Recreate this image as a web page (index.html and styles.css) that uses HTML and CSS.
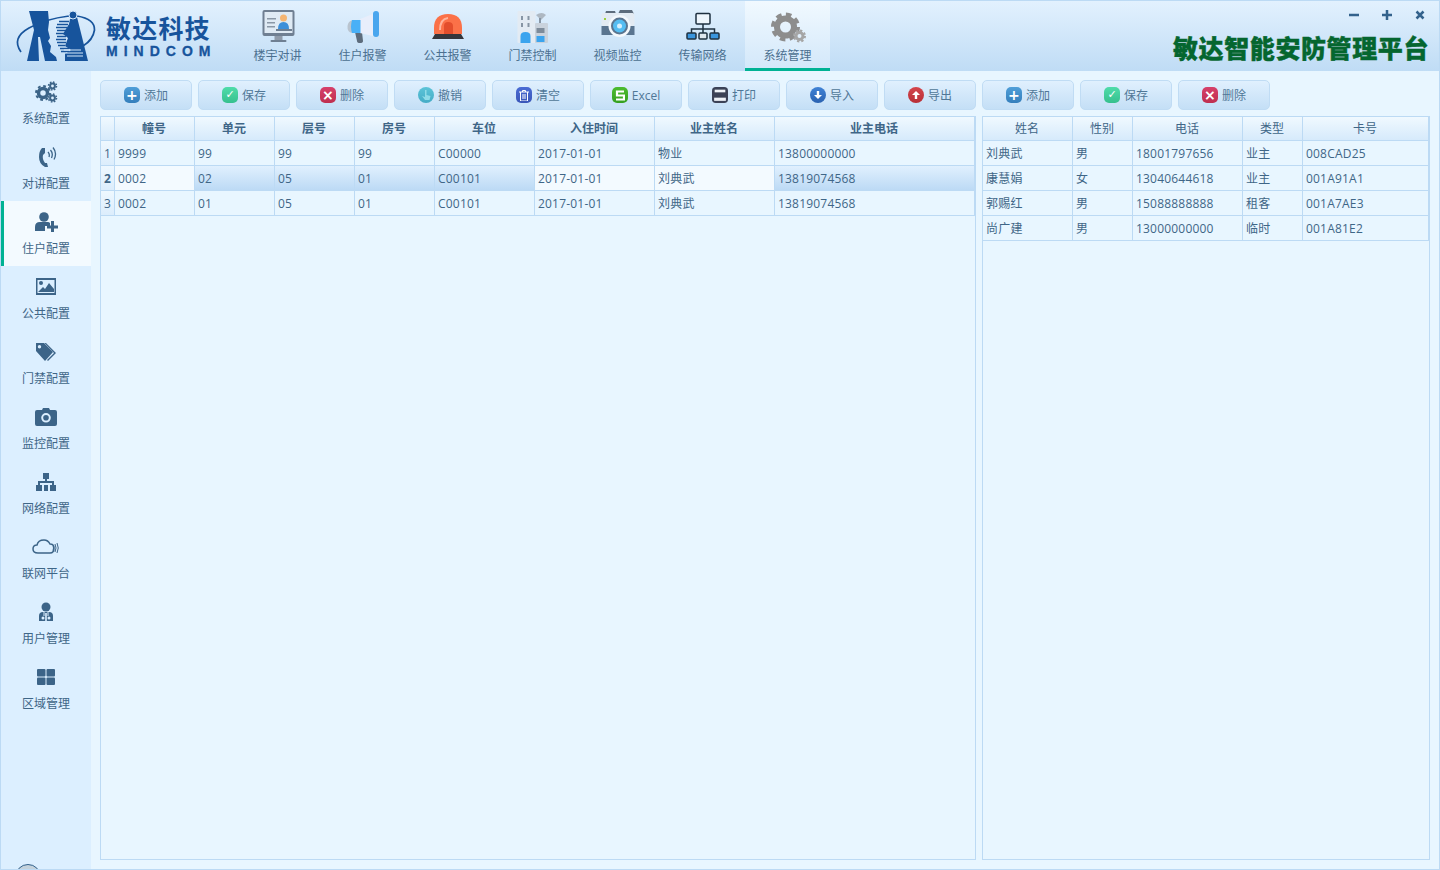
FILE: index.html
```html
<!DOCTYPE html>
<html lang="zh-CN">
  <head>
    <meta charset="UTF-8" />
    <title>敏达智能安防管理平台</title>
    <link rel="stylesheet" href="styles.css">
  </head>
  <body>
    <div class="app">
      <header class="header">
        <div class="brand">
          <svg class="brand-logo" width="82" height="52" viewBox="0 0 82 52">
            <path d="M6 42 Q-4 28 14 18 Q30 9 54 6" fill="none" stroke="#17549c" stroke-width="1.700"/>
            <path d="M62 6 Q80 9 79.500 20 Q78 30 68 36" fill="none" stroke="#17549c" stroke-width="1.700"/>
            <path d="M14 1 H33 L34 12 L33 20 L35 28 L33 31 L36 36 L35 42 L41 47 L42 51 H30 L25 27 L23 27 L24 51 H12 L19 20Z" fill="#17549c"/>
            <path d="M55 9 L62 7 L73 51 H50 L50 44 L56 40 L50 36 L53 28 L48 24 L54 14Z" fill="#17549c"/>
            <path d="M44 11.500h10M42 14.500h11M41 17.500h11M42 20.500h9M41 23.500h8M42 26.500h9M41 29.500h10M42 32.500h9M43 35.500h7M45 38.500h9M46 41.500h8" stroke="#17549c" stroke-width="1.600"/>
            <path d="M49 40h17M51 43h17M52 46h16" stroke="#d6e9fb" stroke-width="1"/>
            <circle cx="58" cy="5" r="4" fill="#17549c" stroke="#d6e9fb"/>
          </svg>
          <div class="brand-text">
            <div class="brand-name">敏达科技</div>
            <div class="brand-en">MINDCOM</div>
          </div>
        </div>
        <nav class="tabs">
          <a class="tab">
            <svg width="40" height="36" viewBox="0 0 40 36">
              <rect x="4.500" y="1" width="32" height="26" rx="2" fill="#6f7f92"/>
              <rect x="6.500" y="3" width="28" height="21" fill="#dfeaf4"/>
              <path d="M9 9h9v1.500H9zM9 13h8v1.500H9zM9 17h8v1.500H9z" fill="#8a97a6"/>
              <circle cx="25.500" cy="9" r="3.500" fill="#f5b572"/>
              <path d="M20 20 Q20 13 25.500 13 Q31 13 31 20Z" fill="#3d8fd9"/>
              <rect x="18" y="20" width="16" height="2" fill="#6f7f92"/>
              <path d="M16.500 27h8v4h-8z" fill="#8f9baa"/>
              <rect x="12.500" y="31" width="16" height="2" rx="1" fill="#6f7f92"/>
            </svg>
            <span>楼宇对讲</span>
          </a>
          <a class="tab">
            <svg width="40" height="36" viewBox="0 0 40 36">
              <path d="M12 23 L19 23 L20 32 Q20 34 17 34 Q14 34 14 32Z" fill="#5d6c7c"/>
              <path d="M10 11 L9 24 Q4 23 4.500 17 Q5 12 10 11Z" fill="#b9c4cf"/>
              <path d="M17 10 L30 5 L30 27 L17 24Z" fill="#e8eefb"/>
              <path d="M9 11 H17.500 V24 H9 Q7 18 9 11Z" fill="#49b0f7"/>
              <rect x="30" y="2" width="6" height="26" rx="3" fill="#49a6ee"/>
            </svg>
            <span>住户报警</span>
          </a>
          <a class="tab">
            <svg width="40" height="36" viewBox="0 0 40 36">
              <path d="M6 25 V19 Q6 5 20 5 Q34 5 34 19 V25Z" fill="#fb7148"/>
              <path d="M12 21 Q12 10 20 9" stroke="#ffb49c" stroke-width="2" fill="none"/>
              <path d="M16 25 V17 Q16 13 20 13 Q25 13 25 17 V25Z" fill="#e34e2c"/>
              <path d="M7 25h26l3 5H4z" fill="#35363c"/>
            </svg>
            <span>公共报警</span>
          </a>
          <a class="tab">
            <svg width="40" height="36" viewBox="0 0 40 36">
              <rect x="4.500" y="2" width="18" height="32" rx="1" fill="#e3ebf3"/>
              <rect x="8" y="7" width="2" height="4" fill="#8795a4"/><rect x="14.500" y="7" width="2" height="4" fill="#8795a4"/>
              <rect x="8" y="14" width="2" height="4" fill="#8795a4"/><rect x="14.500" y="14" width="2" height="4" fill="#8795a4"/>
              <path d="M7.500 34 V27 Q7.500 23 12.500 23 Q17.500 23 17.500 27 V34Z" fill="#3ba4ee"/>
              <rect x="22" y="14" width="13" height="20" rx="1" fill="#c9d2dc"/>
              <rect x="23.500" y="19" width="8" height="5" fill="#7d8b9a"/>
              <rect x="23.500" y="27" width="8" height="6" fill="#3ba4ee"/>
              <path d="M23 6 Q29 2 33 6 L28 11Z" fill="#aeb8c2"/>
              <path d="M27 9v5" stroke="#8795a4" stroke-width="2"/>
            </svg>
            <span>门禁控制</span>
          </a>
          <a class="tab">
            <svg width="40" height="36" viewBox="0 0 40 36">
              <path d="M8 2h9l1 3H7zM22 1h12l2 4H20z" fill="#5d6c7c"/>
              <rect x="3.500" y="4" width="33" height="13" rx="2" fill="#e3ebf3"/>
              <rect x="3.500" y="17" width="33" height="9" fill="#5a7590"/>
              <rect x="6" y="9" width="2" height="2" fill="#9bd13f"/>
              <circle cx="21.500" cy="17" r="11" fill="#f4f8fc"/>
              <circle cx="21.500" cy="17" r="8.500" fill="#5a7590"/>
              <circle cx="21.500" cy="17" r="6.500" fill="#55bdf2"/>
              <circle cx="21.500" cy="17" r="2.500" fill="#d6f0fe"/>
            </svg>
            <span>视频监控</span>
          </a>
          <a class="tab">
            <svg width="40" height="36" viewBox="0 0 40 36">
              <rect x="13" y="4.500" width="14" height="10.500" rx="1" fill="#eef6fd" stroke="#1e3040" stroke-width="1.500"/>
              <path d="M20 15v9M8.500 24v-4h23v4" stroke="#1e3040" stroke-width="1.500" fill="none"/>
              <rect x="4" y="24" width="9" height="6" rx="1" fill="#3a95dd" stroke="#1e3040" stroke-width="1.500"/>
              <rect x="16" y="24" width="8" height="6" rx="1" fill="#dfe8f0" stroke="#1e3040" stroke-width="1.500"/>
              <rect x="27" y="24" width="9" height="6" rx="1" fill="#3a95dd" stroke="#1e3040" stroke-width="1.500"/>
            </svg>
            <span>传输网络</span>
          </a>
          <a class="tab tab-active">
            <svg width="40" height="36" viewBox="0 0 40 36">
              <circle cx="17.500" cy="18" r="8.500" fill="none" stroke="#8d8d8d" stroke-width="6"/>
              <circle cx="17.500" cy="18" r="12.500" fill="none" stroke="#8d8d8d" stroke-width="4" stroke-dasharray="5.500 4.320"/>
              <circle cx="31.500" cy="27" r="3.500" fill="none" stroke="#a5a5a5" stroke-width="3"/>
              <circle cx="31.500" cy="27" r="5.500" fill="none" stroke="#a5a5a5" stroke-width="2" stroke-dasharray="2.300 2"/>
            </svg>
            <span>系统管理</span>
          </a>
        </nav>
        <div class="head-right">
          <div class="win-btns">
            <svg width="10" height="10" viewBox="0 0 10 10"><path d="M0 5h10" stroke="#33628c" stroke-width="2.500"/></svg>
            <svg width="10" height="10" viewBox="0 0 10 10"><path d="M0 5h10M5 0v10" stroke="#33628c" stroke-width="2.500"/></svg>
            <svg width="10" height="10" viewBox="0 0 10 10"><path d="M1.500 1.500l7 7M8.500 1.500l-7 7" stroke="#33628c" stroke-width="2.500"/></svg>
          </div>
          <div class="app-title">敏达智能安防管理平台</div>
        </div>
      </header>

      <div class="body">
        <aside class="side">
          <a class="side-item">
            <svg width="24" height="24" viewBox="0 0 24 24">
              <circle cx="9" cy="13" r="4.500" fill="none" stroke="#3c6488" stroke-width="3.500"/>
              <circle cx="9" cy="13" r="7" fill="none" stroke="#3c6488" stroke-width="2" stroke-dasharray="2.800 2.700"/>
              <circle cx="18.500" cy="6" r="2.400" fill="none" stroke="#3c6488" stroke-width="2"/>
              <circle cx="18.500" cy="6" r="4" fill="none" stroke="#3c6488" stroke-width="1.500" stroke-dasharray="1.600 1.540"/>
              <circle cx="18.500" cy="18" r="2.400" fill="none" stroke="#3c6488" stroke-width="2"/>
              <circle cx="18.500" cy="18" r="4" fill="none" stroke="#3c6488" stroke-width="1.500" stroke-dasharray="1.600 1.540"/>
            </svg>
            <span>系统配置</span>
          </a>
          <a class="side-item">
            <svg width="24" height="24" viewBox="0 0 24 24">
              <path d="M8 3 L11 3 L11 8 L9 10 Q8 14 11 18 L13 18 L14 22 L11 22 Q5 19 5 12 Q5 6 8 3Z" fill="#3c6488"/>
              <path d="M14 7 Q16 9 15 12M16.500 5 Q19.500 8.500 17.500 13M19 2.500 Q23.500 8 20 14.500" stroke="#3c6488" stroke-width="1.300" fill="none"/>
            </svg>
            <span>对讲配置</span>
          </a>
          <a class="side-item side-active">
            <svg width="24" height="24" viewBox="0 0 24 24">
              <circle cx="10" cy="7" r="4.800" fill="#3c6488"/>
              <path d="M1 21 V17 Q1 12 6 12 H14 Q15 12 16 13 V16 H11 V21Z" fill="#3c6488"/>
              <path d="M13 15.500h11v3H13zM17 11h3v11h-3z" fill="#3c6488"/>
            </svg>
            <span>住户配置</span>
          </a>
          <a class="side-item">
            <svg width="24" height="24" viewBox="0 0 24 24">
              <path d="M2 3h20v17H2z M3.500 5v13h17V5z" fill="#3c6488" fill-rule="evenodd"/>
              <circle cx="7" cy="8" r="2" fill="#3c6488"/>
              <path d="M4 17 L9 12 L11 14 L15 8 L20 14 V17Z" fill="#3c6488"/>
            </svg>
            <span>公共配置</span>
          </a>
          <a class="side-item">
            <svg width="24" height="24" viewBox="0 0 24 24">
              <path d="M2 3 H10 L19 12 L11 21 L2 11Z M5.500 5 A1.700 1.700 0 1 0 5.501 8.400 A1.700 1.700 0 1 0 5.500 5Z" fill="#3c6488" fill-rule="evenodd"/>
              <path d="M12 3 L22 13 L14 21 L13 20 L20 13 L10.500 3Z" fill="#3c6488"/>
            </svg>
            <span>门禁配置</span>
          </a>
          <a class="side-item">
            <svg width="24" height="24" viewBox="0 0 24 24">
              <path d="M3 5 H8 L9 3 H15 L16 5 H21 Q23 5 23 7 V19 Q23 21 21 21 H3 Q1 21 1 19 V7 Q1 5 3 5Z M12 8 A4.800 4.800 0 1 0 12.010 17.600 A4.800 4.800 0 1 0 12 8Z" fill="#3c6488" fill-rule="evenodd"/>
              <circle cx="12" cy="12.800" r="2.800" fill="#3c6488"/>
            </svg>
            <span>监控配置</span>
          </a>
          <a class="side-item">
            <svg width="24" height="24" viewBox="0 0 24 24">
              <path d="M9 3h6v6h-2v2h7v4h2v6h-6v-6h2v-2h-6v2h2v6H10v-6h2v-2H6v2h2v6H2v-6h2v-4h7V9H9z" fill="#3c6488"/>
            </svg>
            <span>网络配置</span>
          </a>
          <a class="side-item">
            <svg width="28" height="24" viewBox="0 0 28 24">
              <path d="M6 18 Q1 18 1 14 Q1 10 5 10 Q6 5 12 5 Q16 5 18 9 Q22 9 22 13 Q22 18 18 18Z" fill="none" stroke="#3c6488" stroke-width="1.500"/>
              <path d="M23 9 Q25 13 23 17M25 8 Q27.500 13 25 18M21 10.500 Q22 13 21 15.500" fill="none" stroke="#3c6488" stroke-width="1"/>
            </svg>
            <span>联网平台</span>
          </a>
          <a class="side-item">
            <svg width="24" height="24" viewBox="0 0 24 24">
              <circle cx="12" cy="7" r="4.500" fill="#3c6488"/>
              <path d="M5 21 V16 Q5 12 9 12 H15 Q19 12 19 16 V21Z" fill="#3c6488"/>
              <path d="M10 12 L10 16 M14 12 L14 16" stroke="#dcefff" stroke-width="1"/>
              <circle cx="9" cy="18" r="1.500" fill="#dcefff"/><circle cx="15" cy="18" r="1.500" fill="#dcefff"/>
              <rect x="11.200" y="13" width="1.600" height="8" fill="#dcefff"/>
            </svg>
            <span>用户管理</span>
          </a>
          <a class="side-item">
            <svg width="24" height="24" viewBox="0 0 24 24">
              <rect x="3" y="4" width="8.500" height="7.500" rx="1" fill="#3c6488"/>
              <rect x="12.500" y="4" width="8.500" height="7.500" rx="1" fill="#3c6488"/>
              <rect x="3" y="12.500" width="8.500" height="7.500" rx="1" fill="#3c6488"/>
              <rect x="12.500" y="12.500" width="8.500" height="7.500" rx="1" fill="#3c6488"/>
            </svg>
            <span>区域管理</span>
          </a>
          <div class="side-foot"></div>
        </aside>

        <main class="content">
          <div class="toolbar">
            <button class="btn"><i class="ico ico-blue">+</i>添加</button>
            <button class="btn"><i class="ico ico-green">✓</i>保存</button>
            <button class="btn"><i class="ico ico-red">×</i>删除</button>
            <button class="btn"><i class="ico ico-teal">
              <svg width="12" height="12" viewBox="0 0 12 12"><path d="M5 1h1.500v5l4 1-1 4H5L2 7l3 1z" fill="#8fdbe8"/></svg>
            </i>撤销</button>
            <button class="btn"><i class="ico ico-indigo">
              <svg width="10" height="11" viewBox="0 0 10 11"><path d="M0 2h10M1.500 2v9h7V2M3.500 2V.5h3V2M4 4v5M6 4v5" stroke="#fff" stroke-width="1" fill="none"/></svg>
            </i>清空</button>
            <button class="btn"><i class="ico ico-lime">
              <svg width="10" height="11" viewBox="0 0 10 11"><path d="M9 1.500H2v4h7v4H1" stroke="#fff" stroke-width="2.200" fill="none"/></svg>
            </i>Excel</button>
            <button class="btn"><i class="ico ico-print">
              <svg width="16" height="16" viewBox="0 0 15 15"><rect x="0" y="0" width="15" height="15" rx="3.500" fill="#3b4256"/><rect x="2.500" y="2.500" width="10" height="2.500" fill="#eef2f7"/><rect x="2" y="10" width="11" height="3" fill="#eef2f7"/></svg>
            </i>打印</button>
            <button class="btn"><i class="ico ico-down">
              <svg width="10" height="10" viewBox="0 0 10 10"><path d="M3.800 1h2.400v4H9L5 9 1 5h2.800z" fill="#fff"/></svg>
            </i>导入</button>
            <button class="btn"><i class="ico ico-up">
              <svg width="10" height="10" viewBox="0 0 10 10"><path d="M3.800 9h2.400V5H9L5 1 1 5h2.800z" fill="#fff"/></svg>
            </i>导出</button>
            <button class="btn"><i class="ico ico-blue">+</i>添加</button>
            <button class="btn"><i class="ico ico-green">✓</i>保存</button>
            <button class="btn"><i class="ico ico-red">×</i>删除</button>
          </div>

          <div class="panels">
            <section class="panel panel-left">
              <table class="grid">
                <colgroup>
                  <col class="w14"><col class="w80"><col class="w80"><col class="w80"><col class="w80"><col class="w100"><col class="w120"><col class="w120"><col class="w200">
                </colgroup>
                <thead>
                  <tr><th></th><th>幢号</th><th>单元</th><th>层号</th><th>房号</th><th>车位</th><th>入住时间</th><th>业主姓名</th><th>业主电话</th></tr>
                </thead>
                <tbody>
                  <tr><td class="num">1</td><td>9999</td><td>99</td><td>99</td><td>99</td><td>C00000</td><td>2017-01-01</td><td>物业</td><td>13800000000</td></tr>
                  <tr class="selected"><td class="num">2</td><td class="focus">0002</td><td>02</td><td>05</td><td>01</td><td>C00101</td><td class="focus">2017-01-01</td><td class="focus">刘典武</td><td>13819074568</td></tr>
                  <tr><td class="num">3</td><td>0002</td><td>01</td><td>05</td><td>01</td><td>C00101</td><td>2017-01-01</td><td>刘典武</td><td>13819074568</td></tr>
                </tbody>
              </table>
            </section>
            <section class="panel panel-right">
              <table class="grid grid-plain">
                <colgroup>
                  <col class="w90"><col class="w60"><col class="w110"><col class="w60"><col class="w126">
                </colgroup>
                <thead>
                  <tr><th>姓名</th><th>性别</th><th>电话</th><th>类型</th><th>卡号</th></tr>
                </thead>
                <tbody>
                  <tr><td>刘典武</td><td>男</td><td>18001797656</td><td>业主</td><td>008CAD25</td></tr>
                  <tr><td>康慧娟</td><td>女</td><td>13040644618</td><td>业主</td><td>001A91A1</td></tr>
                  <tr><td>郭赐红</td><td>男</td><td>15088888888</td><td>租客</td><td>001A7AE3</td></tr>
                  <tr><td>尚广建</td><td>男</td><td>13000000000</td><td>临时</td><td>001A81E2</td></tr>
                </tbody>
              </table>
            </section>
          </div>
        </main>
      </div>
    </div>
  </body>
</html>
```

FILE: styles.css
```css
* {
  box-sizing: border-box;
}

html, body {
  margin: 0;
  height: 100%;
  overflow: hidden;
}

body {
  font-family: "Open Sans", "Noto Sans CJK SC", sans-serif;
  font-size: 12px;
  color: #3f6687;
}

.app {
  height: 870px;
  display: flex;
  flex-direction: column;
  border: 1px solid #bcdaf4;
  background: #e8f6ff;
  overflow: hidden;
}

/* top bar */
.header {
  height: 70px;
  flex: none;
  display: flex;
  background: linear-gradient(#e2f1fe, #bfdcf5);
}

.brand {
  width: 234px;
  flex: none;
  display: flex;
  padding: 9px 0 0 14px;
  gap: 9px;
}

.brand-text {
  padding-top: 4px;
}

.brand-name {
  font-size: 25px;
  line-height: 27px;
  font-weight: 700;
  letter-spacing: 1.200px;
  color: #17549c;
  font-family: "Noto Sans CJK SC", sans-serif;
}

.brand-en {
  margin-top: 3px;
  font-family: "Liberation Sans", sans-serif;
  font-size: 14px;
  line-height: 14px;
  font-weight: 700;
  letter-spacing: 6px;
  color: #17549c;
  -webkit-text-stroke: 0.300px #17549c;
}

.tabs {
  display: flex;
}

.tab {
  width: 85px;
  height: 70px;
  padding-top: 8px;
  display: flex;
  flex-direction: column;
  align-items: center;
  gap: 2px;
  color: #4b7090;
}

.tab span {
  line-height: 16px;
  font-family: "Noto Sans CJK SC", sans-serif;
}

.tab-active {
  background: linear-gradient(#f1f9ff, #d3e8fa);
  border-bottom: 3px solid #00b294;
}

.head-right {
  margin-left: auto;
  padding-right: 10px;
  display: flex;
  flex-direction: column;
  align-items: flex-end;
}

.win-btns {
  display: flex;
  gap: 23px;
  padding: 9px 4px 0 0;
  height: 32px;
}

.app-title {
  font-family: "Noto Sans CJK SC", sans-serif;
  font-size: 25px;
  line-height: 28px;
  font-weight: 900;
  letter-spacing: 0.600px;
  color: #05662f;
  -webkit-text-stroke: 0.400px #05662f;
}

/* left menu */
.body {
  flex: 1;
  display: flex;
  min-height: 0;
}

.side {
  width: 90px;
  flex: none;
  display: flex;
  flex-direction: column;
  background: #dcefff;
  overflow: hidden;
}

.side-item {
  height: 65px;
  flex: none;
  padding-top: 9px;
  display: flex;
  flex-direction: column;
  align-items: center;
  gap: 6px;
  color: #3f6687;
}

.side-item span {
  line-height: 16px;
  font-family: "Noto Sans CJK SC", sans-serif;
}

.side-active {
  background: #f3faff;
  box-shadow: inset 3px 0 0 #00b294;
}

.side-foot {
  width: 26px;
  height: 26px;
  margin: 143px 0 0 14px;
  flex: none;
  border-radius: 50%;
  background: #c4d2dc;
  border: 1px solid #33628c;
}

/* content */
.content {
  flex: 1;
  min-width: 0;
  padding: 9px;
  display: flex;
  flex-direction: column;
  gap: 6px;
}

.toolbar {
  display: flex;
  gap: 6px;
}

.btn {
  width: 92px;
  height: 30px;
  padding: 0;
  display: flex;
  align-items: center;
  justify-content: center;
  gap: 4px;
  border: 1px solid #c0dcf4;
  border-radius: 5px;
  background: linear-gradient(#e0f0fe, #c4dff6);
  color: #507797;
  font: inherit;
}

.ico {
  width: 16px;
  height: 16px;
  flex: none;
  display: flex;
  align-items: center;
  justify-content: center;
  border-radius: 5px;
  color: #fff;
  font-style: normal;
  font-weight: 700;
  font-size: 14px;
  line-height: 16px;
  font-family: "DejaVu Sans", sans-serif;
}

.ico-blue { background: linear-gradient(#4f9ed8, #357fbc); }
.ico-green { background: linear-gradient(#4fdcaa, #36c08e); font-size: 11px; }
.ico-red { background: linear-gradient(#d6406a, #bf2f4f); }
.ico-teal { background: linear-gradient(#5cc4d8, #45acc6); border-radius: 8px; }
.ico-indigo { background: linear-gradient(#4a6cd4, #3a56b8); }
.ico-lime { background: linear-gradient(#4cbc30, #35a020); }
.ico-print { background: none; }
.ico-down { background: linear-gradient(#3f82d6, #2a62b0); border-radius: 8px; }
.ico-up { background: linear-gradient(#d4454c, #b82f36); border-radius: 8px; }

.panels {
  flex: 1;
  min-height: 0;
  display: flex;
  gap: 6px;
}

.panel {
  border: 1px solid #bcdaf4;
  background: #e8f6ff;
}

.panel-left {
  width: 876px;
}

.panel-right {
  width: 448px;
}

/* tables */
.grid {
  border-collapse: separate;
  border-spacing: 0;
  table-layout: fixed;
  width: auto;
  color: #3f6687;
}

.w14 { width: 14px; }
.w60 { width: 60px; }
.w80 { width: 80px; }
.w90 { width: 90px; }
.w100 { width: 100px; }
.w110 { width: 110px; }
.w120 { width: 120px; }
.w126 { width: 126px; }
.w200 { width: 200px; }

.grid th,
.grid td {
  border-right: 1px solid #bcdaf4;
  border-bottom: 1px solid #bcdaf4;
  white-space: nowrap;
  overflow: hidden;
  padding: 0;
}

.grid th {
  height: 24px;
  padding: 0 1px 2px 0;
  background: linear-gradient(#f0f9ff, #d6eafb);
  text-align: center;
  font-weight: 700;
  font-family: "Noto Sans CJK SC", sans-serif;
}

.grid-plain th {
  font-weight: 400;
}

.grid td {
  height: 25px;
  padding-left: 3px;
  letter-spacing: 0.200px;
}

.grid .num {
  padding: 0;
  text-align: center;
  background: linear-gradient(#eef8ff, #dcedfc);
}

.selected td {
  background: linear-gradient(#e0f0fe, #bcdaf5);
}

.selected .num {
  font-weight: 700;
}

.selected .focus {
  background: #f3faff;
}
```
